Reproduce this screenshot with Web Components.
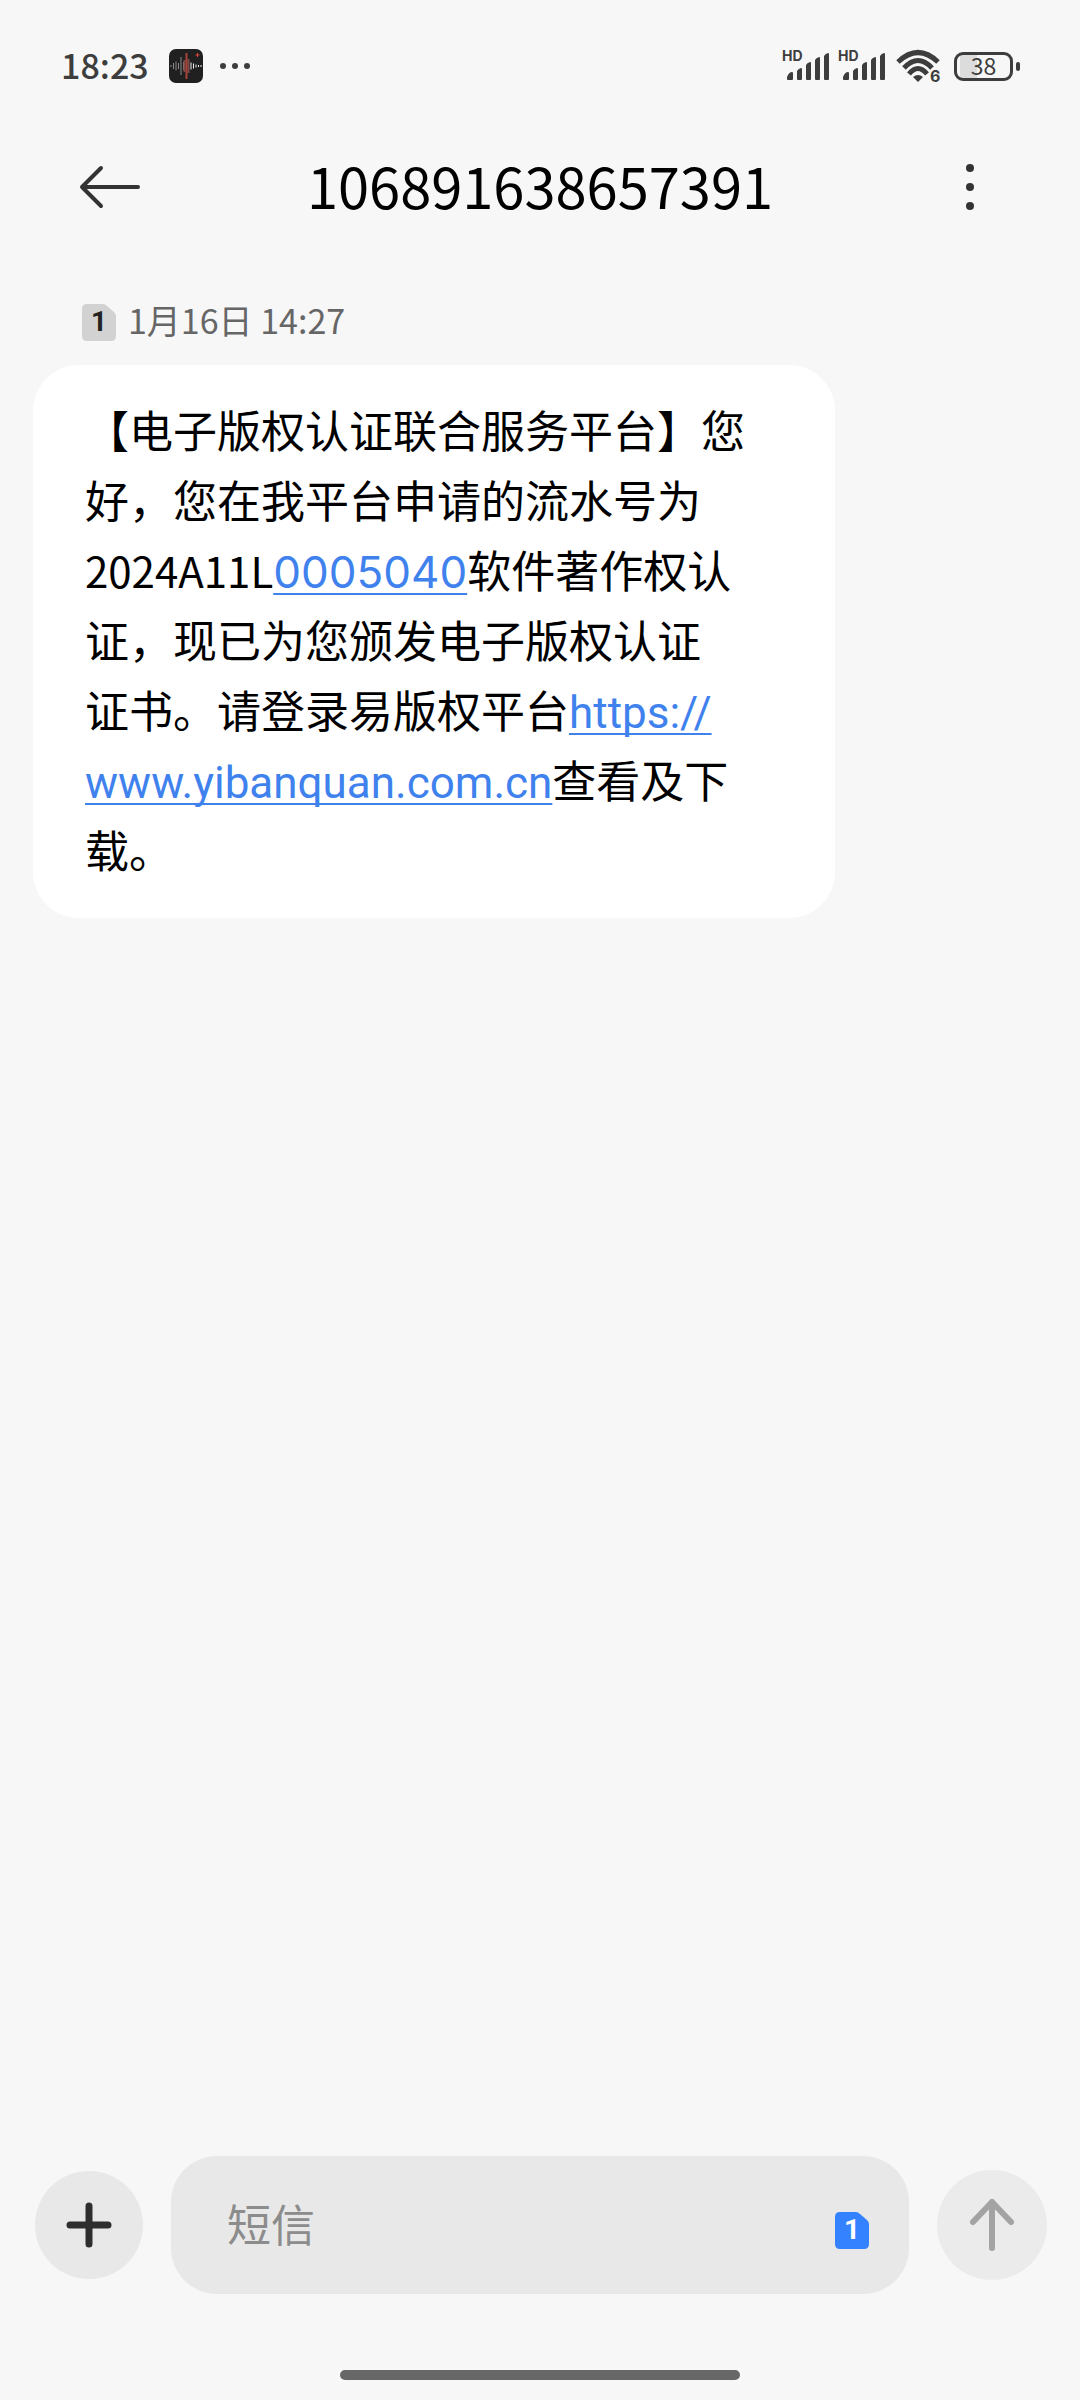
<!DOCTYPE html>
<html lang="zh-CN">
<head>
<meta charset="utf-8">
<meta name="viewport" content="width=device-width, initial-scale=1">
<title>106891638657391</title>
<style>
html, body { margin: 0; background: #f7f7f7; }
body { font-family: "Noto Sans CJK SC", sans-serif; color: #000; }
</style>
</head>
<body>
<message-app></message-app>
<script>
const define = (name, html) => customElements.define(name, class extends HTMLElement {
  constructor() {
    super();
    this.attachShadow({ mode: 'open' }).innerHTML = html;
  }
});

define('signal-bars', `
<style>
:host { display: block; }
svg { display: block; }
text { font: 700 14px Inter, sans-serif; }
</style>
<svg width="48" height="40" viewBox="0 -4 48 40" fill="#3d3d3d" aria-label="HD">
  <text x="0" y="11">HD</text>
  <g transform="translate(0 -2)">
  <path d="M5 31v-2q2-5 5-5 1 0 1 1v6q0 1-1 1H6q-1 0-1-1z"/>
  <path d="M15 31V23q1-2 4-3 1 0 1 1v10q0 1-1 1h-3q-1 0-1-1z"/>
  <path d="M24 31V17q1-2 4-3 1 0 1 1v16q0 1-1 1h-3q-1 0-1-1z"/>
  <path d="M33 31V12q1-2 4-3 1 0 1 1v21q0 1-1 1h-3q-1 0-1-1z"/>
  <path d="M42 31V8q1-2 4-3 1 0 1 1v25q0 1-1 1h-3q-1 0-1-1z"/>
  </g>
</svg>`);

define('wifi-icon', `
<style>
:host { display: block; }
svg { display: block; }
text { font: 700 16px/20px Inter, sans-serif; fill: #3d3d3d; }
</style>
<svg width="52" height="40" viewBox="0 0 52 40" fill="none" stroke="#3d3d3d" stroke-width="5" aria-label="Wi-Fi 6">
  <path d="M4 16Q24-3 44 16M10 22Q24 7 38 22M15 28Q24 17 33 28"/>
  <path d="M19 31q5-4 10 0l-5 5z" fill="#3d3d3d" stroke="none"/>
  <text x="36" y="36" stroke="none">6</text>
</svg>`);

define('battery-level', `
<style>
:host { display: flex; align-items: center; gap: 3px; }
.cell { box-sizing: border-box; width: 59px; height: 29px; border: 3px solid #3d3d3d; border-radius: 9px;
  background: linear-gradient(to right, #f7f7f7 3px, #dcdcdc 3px, #dcdcdc 20px, #f7f7f7 20px);
  font: 400 23px/21px "Noto Sans CJK SC", sans-serif; text-align: center; color: #3d3d3d; }
.tip { width: 4px; height: 9px; border-radius: 2px; background: #3d3d3d; }
</style>
<div class="cell"><slot></slot></div><div class="tip"></div>`);

define('status-bar', `
<style>
:host { display: flex; align-items: center; height: 132px; padding: 0 60px 0 61px; color: #3d3d3d; }
time { padding-bottom: 2px; font: 500 34px/40px "Noto Sans CJK SC", sans-serif; }
.app { display: block; margin-left: 20px; }
.more { display: block; margin-left: 16px; }
.right { margin-left: auto; display: flex; align-items: center; gap: 8px; }
</style>
<time>18:23</time>
<svg class="app" width="34" height="34" viewBox="0 0 34 34" fill="none">
  <rect width="34" height="34" rx="7" fill="#202020"/>
  <path d="M2 16v2M4.500 14v6M7 12.500v9M9.500 14v6M12 8v18M14.500 13v8" stroke="#8a8a8a"/>
  <path d="M15.500 11v12M19.500 10v14" stroke="#7d4a46" stroke-width="2"/>
  <path d="M17.500 4v26" stroke="#a8433a" stroke-width="2"/>
  <path d="M22 13.500v7M24.500 14.500v5M27 15.500v3M29.500 16v2M32 16v2" stroke="#ededed"/>
  <path d="M28.500 4v4M26.500 6h4" stroke="#e0443a"/>
</svg>
<svg class="more" width="32" height="8" viewBox="0 0 32 8" fill="#3d3d3d"><circle cx="4" cy="4" r="3"/><circle cx="16" cy="4" r="3"/><circle cx="28" cy="4" r="3"/></svg>
<div class="right">
  <signal-bars></signal-bars><signal-bars></signal-bars>
  <wifi-icon></wifi-icon>
  <battery-level>38</battery-level>
</div>`);

define('title-bar', `
<style>
:host { display: flex; align-items: center; height: 110px; padding: 0 60px; }
button { display: flex; align-items: center; justify-content: center; width: 100px; height: 100px; padding: 0; border: 0; background: none; }
h1 { flex: 1; margin: 0; padding-bottom: 4px; text-align: center; font: 400 56px/80px "Noto Sans CJK SC", sans-serif; }
</style>
<button aria-label="返回"><svg width="62" height="44" viewBox="0 0 62 44" fill="none" stroke="#333" stroke-width="4" stroke-linecap="round" stroke-linejoin="round"><path d="M59 22H3M22 3 3 22l19 19"/></svg></button>
<h1><slot></slot></h1>
<button aria-label="更多"><svg width="8" height="48" viewBox="0 0 8 48" fill="#333"><circle cx="4" cy="5" r="4"/><circle cx="4" cy="24" r="4"/><circle cx="4" cy="43" r="4"/></svg></button>`);

define('sim-badge', `
<style>
:host { display: block; position: relative; width: 34px; height: 37px; color: var(--sim-ink, #222); }
svg { display: block; width: 100%; height: 100%; }
span { position: absolute; inset: 0; font: 700 28px/36px Roboto, sans-serif; text-align: center; }
</style>
<svg viewBox="0 0 34 37"><path d="M5 0h16q2 0 4 2l7 6q2 2 2 4v20q0 5-5 5H5q-5 0-5-5V5q0-5 5-5z" fill="var(--sim-fill, #d2d2d2)"/></svg>
<span><slot></slot></span>`);

define('message-meta', `
<style>
:host { display: flex; align-items: center; gap: 12px; height: 40px; padding: 0 49px; color: #666; }
time { padding-bottom: 4px; font: 400 34px/40px "Noto Sans CJK SC", sans-serif; }
</style>
<sim-badge>1</sim-badge><time><slot></slot></time>`);

define('message-bubble', `
<style>
:host { display: block; box-sizing: border-box; margin: 23px 212px 0 0; padding: 29px 52px 34px; border-radius: 46px; background: #fff; }
p { margin: 0; font: 400 44px/70px "Noto Sans CJK SC", sans-serif; text-spacing-trim: space-all; }
::slotted(a) { color: #3f82ee; line-height: 1; text-decoration: underline; text-decoration-thickness: 2px; text-underline-offset: 5px; text-decoration-skip-ink: none; }
::slotted(a.number) { font-family: Inter, sans-serif; }
::slotted(a.url) { font-family: Roboto, sans-serif; }
::slotted(.serial) { font-size: 42px; line-height: 1; }
::slotted(.word) { white-space: nowrap; }
</style>
<p><slot></slot></p>`);

define('message-composer', `
<style>
:host { display: flex; align-items: center; gap: 28px; padding: 0 33px 0 35px; }
button { flex: none; display: flex; align-items: center; justify-content: center; width: 108px; height: 108px; padding: 0; border: 0; border-radius: 50%; background: #e8e8e8; }
.send { width: 110px; height: 110px; background: #ebebeb; }
.field { flex: 1; min-width: 0; display: flex; align-items: center; box-sizing: border-box; height: 138px; padding: 0 40px 0 56px; border-radius: 46px; background: #e8e8e8; }
input { flex: 1; min-width: 0; height: 80px; padding: 0 0 4px; box-sizing: border-box; border: 0; outline: 0; background: none; font: 400 44px/76px "Noto Sans CJK SC", sans-serif; color: #000; }
input::placeholder { color: #8c8c8c; opacity: 1; }
sim-badge { margin-top: 10px; --sim-fill: #3482ff; --sim-ink: #fff; }
</style>
<button aria-label="添加"><svg width="46" height="46" viewBox="0 0 46 46" fill="none" stroke="#2e2e2e" stroke-width="7" stroke-linecap="round"><path d="M23 4v38M4 23h38"/></svg></button>
<div class="field"><input type="text" placeholder="短信" aria-label="短信"><sim-badge>1</sim-badge></div>
<button class="send" aria-label="发送"><svg width="46" height="54" viewBox="0 0 46 54" fill="none" stroke="#a3a3a3" stroke-width="6" stroke-linecap="round" stroke-linejoin="round"><path d="M23 50V4M4 24 23 4l19 20"/></svg></button>`);

define('message-app', `
<style>
:host { display: flex; flex-direction: column; min-height: 100vh; }
main { flex: 1; padding: 60px 33px 0; }
.home { width: 400px; height: 10px; margin: 76px auto 20px; border-radius: 5px; background: #676767; }
</style>
<status-bar></status-bar>
<title-bar>106891638657391</title-bar>
<main>
  <message-meta>1月16日 14:27</message-meta>
  <message-bubble>【电子版权认证联合服务平台】您好，您在我平台申请的流水号为<span class="serial">2024A11L</span><a class="number" href="tel:0005040">0005040</a>软件著作权认证，现已为您颁发电子版权认证<span class="word">证书。</span>请登录易版权平台<a class="url" href="https://www.yibanquan.com.cn">https://<wbr>www.yibanquan.com.cn</a>查看及下载。</message-bubble>
</main>
<message-composer></message-composer>
<div class="home"></div>`);
</script>
</body>
</html>
